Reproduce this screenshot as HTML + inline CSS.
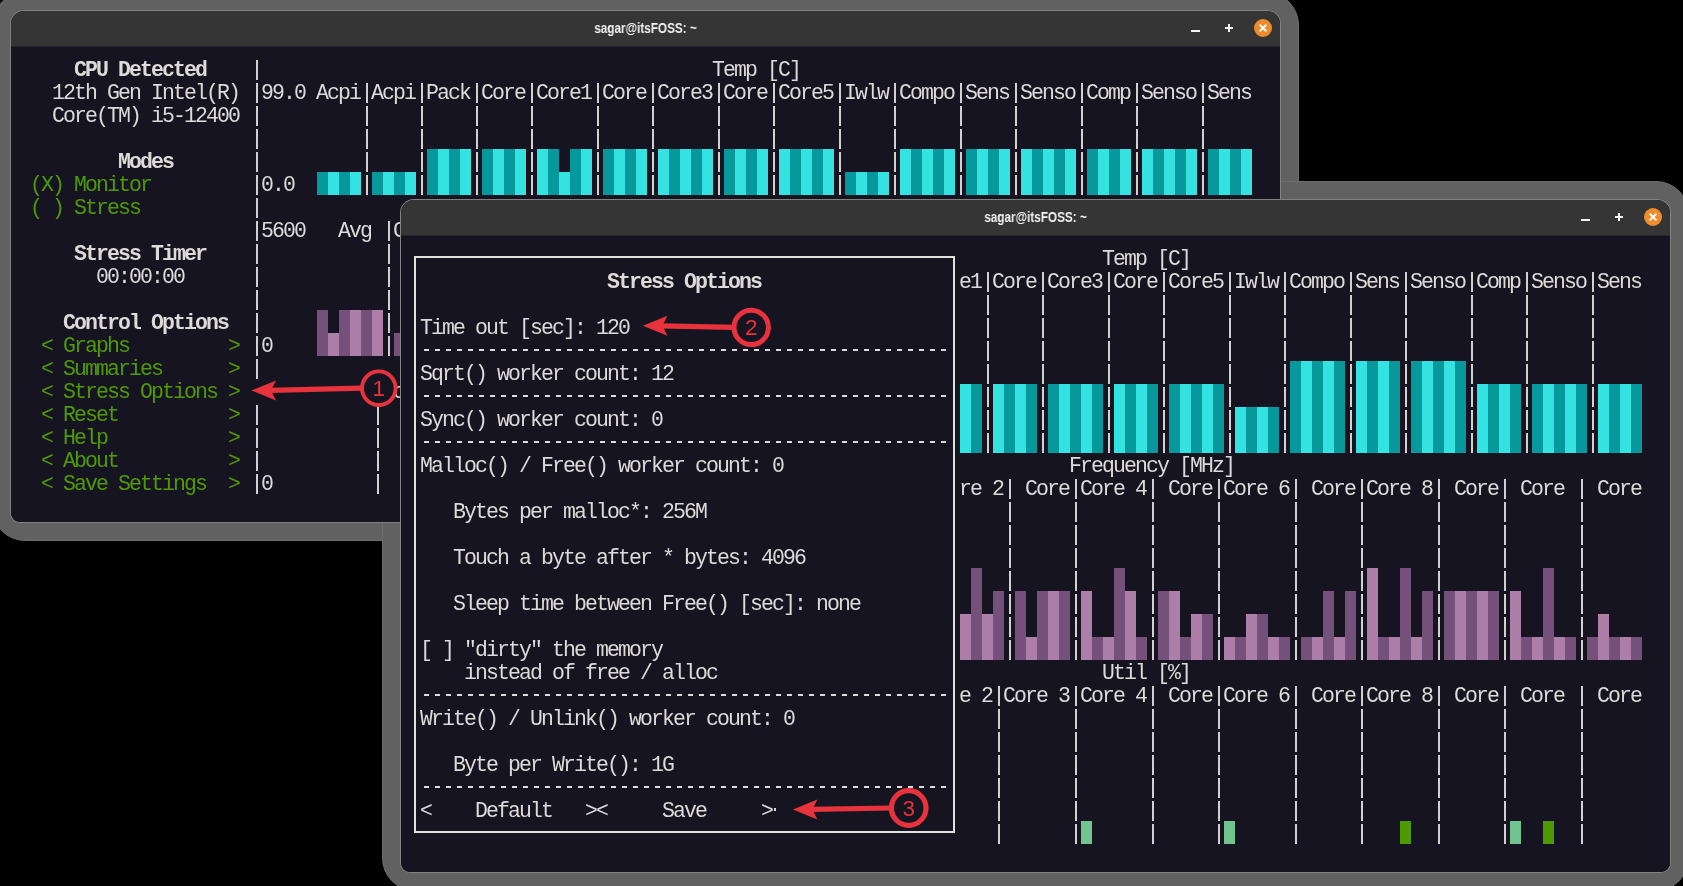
<!DOCTYPE html><html><head><meta charset="utf-8"><style>
*{margin:0;padding:0;box-sizing:border-box}
html,body{width:1683px;height:886px;overflow:hidden;background:#000;position:relative}
.sh{position:absolute;background:#616161;border:1px solid #6c6c6c}
.win{position:absolute;border-radius:14px 14px 10px 10px;overflow:hidden;background:#828282}
.inner{position:absolute;left:1px;top:1px;right:1px;bottom:1px;border-radius:13px 13px 9px 9px;overflow:hidden;background:#171421}
.tb{position:absolute;left:0;top:0;right:0;height:36px;background:#353535;border-bottom:1px solid #262626}
.tt{will-change:transform;position:absolute;left:0;right:0;top:8.5px;text-align:center;font-family:"Liberation Sans",sans-serif;font-weight:bold;font-size:14px;color:#f4f4f4;transform:scaleX(0.84)}
.bmin{position:absolute;right:80.5px;top:18.8px;width:8.4px;height:2.6px;background:#f4f4f4}
.bplus{position:absolute;right:47px;top:12.8px;width:8.4px;height:8.4px}
.bplus div:first-child{position:absolute;left:0;top:3.2px;width:8.4px;height:2.1px;background:#f4f4f4}
.bplus div:last-child{position:absolute;left:3.2px;top:0;width:2.1px;height:8.4px;background:#f4f4f4}
.bclose{position:absolute;right:8px;top:8px;width:18px;height:18px;border-radius:50%;background:#ef8c2b}
.bclose svg{position:absolute;left:0;top:0}
.term{position:absolute;left:0;top:36px;right:0;background:#171421}
.L{position:absolute;left:0;top:0;width:1683px;height:886px;overflow:hidden;will-change:transform}
.b{position:absolute;width:11px}
.s{position:absolute;width:2.1px;height:19.6px;background:#d2d1cd}
.t{position:absolute;height:23px;line-height:23px;white-space:pre;font-family:"Liberation Mono",monospace;font-size:21.5px;letter-spacing:-1.902px;margin-left:-0.95px;margin-top:1.5px;color:#dcdbd7}
.t.bd{font-weight:bold}
.t.g{color:#4e9a06}
.ar{position:absolute;left:0;top:0}
</style></head><body>
<div class="sh" style="left:-8px;top:-8px;width:1307px;height:549px;border-radius:33px"></div>
<div class="sh" style="left:382px;top:181px;width:1307px;height:710px;border-radius:33px"></div>
<div class="win" style="left:10px;top:10px;width:1271px;height:513px">
<div class="inner">
<div class="tb"><div class="tt">sagar@itsFOSS: ~</div>
<div class="bmin"></div><div class="bplus"><div></div><div></div></div><div class="bclose"><svg width="18" height="18" viewBox="0 0 18 18"><path d="M5.6 5.6 L12.4 12.4 M12.4 5.6 L5.6 12.4" stroke="#fff" stroke-width="2" stroke-linecap="butt"/></svg></div>
</div>
<div class="term" style="height:475px"></div>
</div>
</div>
<div class="L" style="clip-path:inset(47px 402px 363px 11px)">
<div class="b" style="left:317.0px;top:172.0px;height:23.0px;background:#06989a"></div>
<div class="b" style="left:328.0px;top:172.0px;height:23.0px;background:#34e2e2"></div>
<div class="b" style="left:339.0px;top:172.0px;height:23.0px;background:#06989a"></div>
<div class="b" style="left:350.0px;top:172.0px;height:23.0px;background:#34e2e2"></div>
<div class="b" style="left:372.0px;top:172.0px;height:23.0px;background:#06989a"></div>
<div class="b" style="left:383.0px;top:172.0px;height:23.0px;background:#34e2e2"></div>
<div class="b" style="left:394.0px;top:172.0px;height:23.0px;background:#06989a"></div>
<div class="b" style="left:405.0px;top:172.0px;height:23.0px;background:#34e2e2"></div>
<div class="b" style="left:427.0px;top:149.0px;height:46.0px;background:#06989a"></div>
<div class="b" style="left:438.0px;top:149.0px;height:46.0px;background:#34e2e2"></div>
<div class="b" style="left:449.0px;top:149.0px;height:46.0px;background:#06989a"></div>
<div class="b" style="left:460.0px;top:149.0px;height:46.0px;background:#34e2e2"></div>
<div class="b" style="left:482.0px;top:149.0px;height:46.0px;background:#06989a"></div>
<div class="b" style="left:493.0px;top:149.0px;height:46.0px;background:#34e2e2"></div>
<div class="b" style="left:504.0px;top:149.0px;height:46.0px;background:#06989a"></div>
<div class="b" style="left:515.0px;top:149.0px;height:46.0px;background:#34e2e2"></div>
<div class="b" style="left:537.0px;top:149.0px;height:46.0px;background:#34e2e2"></div>
<div class="b" style="left:548.0px;top:149.0px;height:46.0px;background:#06989a"></div>
<div class="b" style="left:559.0px;top:172.0px;height:23.0px;background:#34e2e2"></div>
<div class="b" style="left:570.0px;top:149.0px;height:46.0px;background:#06989a"></div>
<div class="b" style="left:581.0px;top:149.0px;height:46.0px;background:#34e2e2"></div>
<div class="b" style="left:603.0px;top:149.0px;height:46.0px;background:#06989a"></div>
<div class="b" style="left:614.0px;top:149.0px;height:46.0px;background:#34e2e2"></div>
<div class="b" style="left:625.0px;top:149.0px;height:46.0px;background:#06989a"></div>
<div class="b" style="left:636.0px;top:149.0px;height:46.0px;background:#34e2e2"></div>
<div class="b" style="left:658.0px;top:149.0px;height:46.0px;background:#34e2e2"></div>
<div class="b" style="left:669.0px;top:149.0px;height:46.0px;background:#06989a"></div>
<div class="b" style="left:680.0px;top:149.0px;height:46.0px;background:#34e2e2"></div>
<div class="b" style="left:691.0px;top:149.0px;height:46.0px;background:#06989a"></div>
<div class="b" style="left:702.0px;top:149.0px;height:46.0px;background:#34e2e2"></div>
<div class="b" style="left:724.0px;top:149.0px;height:46.0px;background:#06989a"></div>
<div class="b" style="left:735.0px;top:149.0px;height:46.0px;background:#34e2e2"></div>
<div class="b" style="left:746.0px;top:149.0px;height:46.0px;background:#06989a"></div>
<div class="b" style="left:757.0px;top:149.0px;height:46.0px;background:#34e2e2"></div>
<div class="b" style="left:779.0px;top:149.0px;height:46.0px;background:#34e2e2"></div>
<div class="b" style="left:790.0px;top:149.0px;height:46.0px;background:#06989a"></div>
<div class="b" style="left:801.0px;top:149.0px;height:46.0px;background:#34e2e2"></div>
<div class="b" style="left:812.0px;top:149.0px;height:46.0px;background:#06989a"></div>
<div class="b" style="left:823.0px;top:149.0px;height:46.0px;background:#34e2e2"></div>
<div class="b" style="left:845.0px;top:172.0px;height:23.0px;background:#06989a"></div>
<div class="b" style="left:856.0px;top:172.0px;height:23.0px;background:#34e2e2"></div>
<div class="b" style="left:867.0px;top:172.0px;height:23.0px;background:#06989a"></div>
<div class="b" style="left:878.0px;top:172.0px;height:23.0px;background:#34e2e2"></div>
<div class="b" style="left:900.0px;top:149.0px;height:46.0px;background:#34e2e2"></div>
<div class="b" style="left:911.0px;top:149.0px;height:46.0px;background:#06989a"></div>
<div class="b" style="left:922.0px;top:149.0px;height:46.0px;background:#34e2e2"></div>
<div class="b" style="left:933.0px;top:149.0px;height:46.0px;background:#06989a"></div>
<div class="b" style="left:944.0px;top:149.0px;height:46.0px;background:#34e2e2"></div>
<div class="b" style="left:966.0px;top:149.0px;height:46.0px;background:#06989a"></div>
<div class="b" style="left:977.0px;top:149.0px;height:46.0px;background:#34e2e2"></div>
<div class="b" style="left:988.0px;top:149.0px;height:46.0px;background:#06989a"></div>
<div class="b" style="left:999.0px;top:149.0px;height:46.0px;background:#34e2e2"></div>
<div class="b" style="left:1021.0px;top:149.0px;height:46.0px;background:#34e2e2"></div>
<div class="b" style="left:1032.0px;top:149.0px;height:46.0px;background:#06989a"></div>
<div class="b" style="left:1043.0px;top:149.0px;height:46.0px;background:#34e2e2"></div>
<div class="b" style="left:1054.0px;top:149.0px;height:46.0px;background:#06989a"></div>
<div class="b" style="left:1065.0px;top:149.0px;height:46.0px;background:#34e2e2"></div>
<div class="b" style="left:1087.0px;top:149.0px;height:46.0px;background:#06989a"></div>
<div class="b" style="left:1098.0px;top:149.0px;height:46.0px;background:#34e2e2"></div>
<div class="b" style="left:1109.0px;top:149.0px;height:46.0px;background:#06989a"></div>
<div class="b" style="left:1120.0px;top:149.0px;height:46.0px;background:#34e2e2"></div>
<div class="b" style="left:1142.0px;top:149.0px;height:46.0px;background:#34e2e2"></div>
<div class="b" style="left:1153.0px;top:149.0px;height:46.0px;background:#06989a"></div>
<div class="b" style="left:1164.0px;top:149.0px;height:46.0px;background:#34e2e2"></div>
<div class="b" style="left:1175.0px;top:149.0px;height:46.0px;background:#06989a"></div>
<div class="b" style="left:1186.0px;top:149.0px;height:46.0px;background:#34e2e2"></div>
<div class="b" style="left:1208.0px;top:149.0px;height:46.0px;background:#06989a"></div>
<div class="b" style="left:1219.0px;top:149.0px;height:46.0px;background:#34e2e2"></div>
<div class="b" style="left:1230.0px;top:149.0px;height:46.0px;background:#06989a"></div>
<div class="b" style="left:1241.0px;top:149.0px;height:46.0px;background:#34e2e2"></div>
<div class="b" style="left:317.0px;top:310.0px;height:46.0px;background:#75507b"></div>
<div class="b" style="left:328.0px;top:333.0px;height:23.0px;background:#ad7fa8"></div>
<div class="b" style="left:339.0px;top:310.0px;height:46.0px;background:#75507b"></div>
<div class="b" style="left:350.0px;top:310.0px;height:46.0px;background:#ad7fa8"></div>
<div class="b" style="left:361.0px;top:310.0px;height:46.0px;background:#75507b"></div>
<div class="b" style="left:372.0px;top:310.0px;height:46.0px;background:#ad7fa8"></div>
<div class="b" style="left:394.0px;top:333.0px;height:23.0px;background:#75507b"></div>
<div class="s" style="left:255.5px;top:60.0px"></div>
<div class="s" style="left:255.5px;top:83.0px"></div>
<div class="s" style="left:365.5px;top:83.0px"></div>
<div class="s" style="left:420.5px;top:83.0px"></div>
<div class="s" style="left:475.5px;top:83.0px"></div>
<div class="s" style="left:530.5px;top:83.0px"></div>
<div class="s" style="left:596.5px;top:83.0px"></div>
<div class="s" style="left:651.5px;top:83.0px"></div>
<div class="s" style="left:717.5px;top:83.0px"></div>
<div class="s" style="left:772.5px;top:83.0px"></div>
<div class="s" style="left:838.5px;top:83.0px"></div>
<div class="s" style="left:893.5px;top:83.0px"></div>
<div class="s" style="left:959.5px;top:83.0px"></div>
<div class="s" style="left:1014.5px;top:83.0px"></div>
<div class="s" style="left:1080.5px;top:83.0px"></div>
<div class="s" style="left:1135.5px;top:83.0px"></div>
<div class="s" style="left:1201.5px;top:83.0px"></div>
<div class="s" style="left:255.5px;top:106.0px"></div>
<div class="s" style="left:365.5px;top:106.0px"></div>
<div class="s" style="left:420.5px;top:106.0px"></div>
<div class="s" style="left:475.5px;top:106.0px"></div>
<div class="s" style="left:530.5px;top:106.0px"></div>
<div class="s" style="left:596.5px;top:106.0px"></div>
<div class="s" style="left:651.5px;top:106.0px"></div>
<div class="s" style="left:717.5px;top:106.0px"></div>
<div class="s" style="left:772.5px;top:106.0px"></div>
<div class="s" style="left:838.5px;top:106.0px"></div>
<div class="s" style="left:893.5px;top:106.0px"></div>
<div class="s" style="left:959.5px;top:106.0px"></div>
<div class="s" style="left:1014.5px;top:106.0px"></div>
<div class="s" style="left:1080.5px;top:106.0px"></div>
<div class="s" style="left:1135.5px;top:106.0px"></div>
<div class="s" style="left:1201.5px;top:106.0px"></div>
<div class="s" style="left:255.5px;top:129.0px"></div>
<div class="s" style="left:365.5px;top:129.0px"></div>
<div class="s" style="left:420.5px;top:129.0px"></div>
<div class="s" style="left:475.5px;top:129.0px"></div>
<div class="s" style="left:530.5px;top:129.0px"></div>
<div class="s" style="left:596.5px;top:129.0px"></div>
<div class="s" style="left:651.5px;top:129.0px"></div>
<div class="s" style="left:717.5px;top:129.0px"></div>
<div class="s" style="left:772.5px;top:129.0px"></div>
<div class="s" style="left:838.5px;top:129.0px"></div>
<div class="s" style="left:893.5px;top:129.0px"></div>
<div class="s" style="left:959.5px;top:129.0px"></div>
<div class="s" style="left:1014.5px;top:129.0px"></div>
<div class="s" style="left:1080.5px;top:129.0px"></div>
<div class="s" style="left:1135.5px;top:129.0px"></div>
<div class="s" style="left:1201.5px;top:129.0px"></div>
<div class="s" style="left:255.5px;top:152.0px"></div>
<div class="s" style="left:365.5px;top:152.0px"></div>
<div class="s" style="left:420.5px;top:152.0px"></div>
<div class="s" style="left:475.5px;top:152.0px"></div>
<div class="s" style="left:530.5px;top:152.0px"></div>
<div class="s" style="left:596.5px;top:152.0px"></div>
<div class="s" style="left:651.5px;top:152.0px"></div>
<div class="s" style="left:717.5px;top:152.0px"></div>
<div class="s" style="left:772.5px;top:152.0px"></div>
<div class="s" style="left:838.5px;top:152.0px"></div>
<div class="s" style="left:893.5px;top:152.0px"></div>
<div class="s" style="left:959.5px;top:152.0px"></div>
<div class="s" style="left:1014.5px;top:152.0px"></div>
<div class="s" style="left:1080.5px;top:152.0px"></div>
<div class="s" style="left:1135.5px;top:152.0px"></div>
<div class="s" style="left:1201.5px;top:152.0px"></div>
<div class="s" style="left:255.5px;top:175.0px"></div>
<div class="s" style="left:365.5px;top:175.0px"></div>
<div class="s" style="left:420.5px;top:175.0px"></div>
<div class="s" style="left:475.5px;top:175.0px"></div>
<div class="s" style="left:530.5px;top:175.0px"></div>
<div class="s" style="left:596.5px;top:175.0px"></div>
<div class="s" style="left:651.5px;top:175.0px"></div>
<div class="s" style="left:717.5px;top:175.0px"></div>
<div class="s" style="left:772.5px;top:175.0px"></div>
<div class="s" style="left:838.5px;top:175.0px"></div>
<div class="s" style="left:893.5px;top:175.0px"></div>
<div class="s" style="left:959.5px;top:175.0px"></div>
<div class="s" style="left:1014.5px;top:175.0px"></div>
<div class="s" style="left:1080.5px;top:175.0px"></div>
<div class="s" style="left:1135.5px;top:175.0px"></div>
<div class="s" style="left:1201.5px;top:175.0px"></div>
<div class="s" style="left:255.5px;top:198.0px"></div>
<div class="s" style="left:255.5px;top:221.0px"></div>
<div class="s" style="left:387.5px;top:221.0px"></div>
<div class="s" style="left:255.5px;top:244.0px"></div>
<div class="s" style="left:387.5px;top:244.0px"></div>
<div class="s" style="left:255.5px;top:267.0px"></div>
<div class="s" style="left:387.5px;top:267.0px"></div>
<div class="s" style="left:255.5px;top:290.0px"></div>
<div class="s" style="left:387.5px;top:290.0px"></div>
<div class="s" style="left:255.5px;top:313.0px"></div>
<div class="s" style="left:387.5px;top:313.0px"></div>
<div class="s" style="left:255.5px;top:336.0px"></div>
<div class="s" style="left:387.5px;top:336.0px"></div>
<div class="s" style="left:255.5px;top:359.0px"></div>
<div class="s" style="left:255.5px;top:405.0px"></div>
<div class="s" style="left:376.5px;top:405.0px"></div>
<div class="s" style="left:255.5px;top:428.0px"></div>
<div class="s" style="left:376.5px;top:428.0px"></div>
<div class="s" style="left:255.5px;top:451.0px"></div>
<div class="s" style="left:376.5px;top:451.0px"></div>
<div class="s" style="left:255.5px;top:474.0px"></div>
<div class="s" style="left:376.5px;top:474.0px"></div>
<div class="t bd" style="left:75.0px;top:57.0px">CPU Detected</div>
<div class="t" style="left:713.0px;top:57.0px">Temp [C]</div>
<div class="t" style="left:53.0px;top:80.0px">12th Gen Intel(R)</div>
<div class="t" style="left:262.0px;top:80.0px">99.0 Acpi</div>
<div class="t" style="left:372.0px;top:80.0px">Acpi</div>
<div class="t" style="left:427.0px;top:80.0px">Pack</div>
<div class="t" style="left:482.0px;top:80.0px">Core</div>
<div class="t" style="left:537.0px;top:80.0px">Core1</div>
<div class="t" style="left:603.0px;top:80.0px">Core</div>
<div class="t" style="left:658.0px;top:80.0px">Core3</div>
<div class="t" style="left:724.0px;top:80.0px">Core</div>
<div class="t" style="left:779.0px;top:80.0px">Core5</div>
<div class="t" style="left:845.0px;top:80.0px">Iwlw</div>
<div class="t" style="left:900.0px;top:80.0px">Compo</div>
<div class="t" style="left:966.0px;top:80.0px">Sens</div>
<div class="t" style="left:1021.0px;top:80.0px">Senso</div>
<div class="t" style="left:1087.0px;top:80.0px">Comp</div>
<div class="t" style="left:1142.0px;top:80.0px">Senso</div>
<div class="t" style="left:1208.0px;top:80.0px">Sens</div>
<div class="t" style="left:53.0px;top:103.0px">Core(TM) i5-12400</div>
<div class="t bd" style="left:119.0px;top:149.0px">Modes</div>
<div class="t g" style="left:31.0px;top:172.0px">(X) Monitor</div>
<div class="t" style="left:262.0px;top:172.0px">0.0</div>
<div class="t g" style="left:31.0px;top:195.0px">( ) Stress</div>
<div class="t" style="left:262.0px;top:218.0px">5600   Avg</div>
<div class="t" style="left:394.0px;top:218.0px">C</div>
<div class="t bd" style="left:75.0px;top:241.0px">Stress Timer</div>
<div class="t" style="left:97.0px;top:264.0px">00:00:00</div>
<div class="t bd" style="left:64.0px;top:310.0px">Control Options</div>
<div class="t" style="left:262.0px;top:333.0px">0</div>
<div class="t g" style="left:42.0px;top:333.0px">&lt; Graphs         &gt;</div>
<div class="t g" style="left:42.0px;top:356.0px">&lt; Summaries      &gt;</div>
<div class="t g" style="left:42.0px;top:379.0px">&lt; Stress Options &gt;</div>
<div class="t g" style="left:42.0px;top:402.0px">&lt; Reset          &gt;</div>
<div class="t g" style="left:42.0px;top:425.0px">&lt; Help           &gt;</div>
<div class="t g" style="left:42.0px;top:448.0px">&lt; About          &gt;</div>
<div class="t g" style="left:42.0px;top:471.0px">&lt; Save Settings  &gt;</div>
<div class="t" style="left:262.0px;top:471.0px">0</div>
<div class="t" style="left:383.0px;top:379.0px">Co</div>
</div>
<svg class="ar" width="1683" height="886" viewBox="0 0 1683 886"><path d="M269.5 390.4 L362.0 388.2" stroke="#e8333c" stroke-width="5.2" /><path d="M251.5 390.4 L276.0 380.4 L271.0 390.4 L276.0 400.4 Z" fill="#e8333c"/><circle cx="378.8" cy="388.2" r="16.8" fill="#171421" stroke="#e8333c" stroke-width="3.9"/><text x="378.8" y="396.2" font-family="Liberation Sans" font-size="22.5" fill="#e8333c" text-anchor="middle">1</text></svg>
<div class="win" style="left:400px;top:199px;width:1271px;height:674px">
<div class="inner">
<div class="tb"><div class="tt">sagar@itsFOSS: ~</div>
<div class="bmin"></div><div class="bplus"><div></div><div></div></div><div class="bclose"><svg width="18" height="18" viewBox="0 0 18 18"><path d="M5.6 5.6 L12.4 12.4 M12.4 5.6 L5.6 12.4" stroke="#fff" stroke-width="2" stroke-linecap="butt"/></svg></div>
</div>
<div class="term" style="height:636px"></div>
</div>
</div>
<div class="L" style="clip-path:inset(236px 13px 14px 401px)">
<div class="b" style="left:960.0px;top:384.0px;height:69.0px;background:#34e2e2"></div>
<div class="b" style="left:971.0px;top:384.0px;height:69.0px;background:#06989a"></div>
<div class="b" style="left:993.0px;top:384.0px;height:69.0px;background:#34e2e2"></div>
<div class="b" style="left:1004.0px;top:384.0px;height:69.0px;background:#06989a"></div>
<div class="b" style="left:1015.0px;top:384.0px;height:69.0px;background:#34e2e2"></div>
<div class="b" style="left:1026.0px;top:384.0px;height:69.0px;background:#06989a"></div>
<div class="b" style="left:1048.0px;top:384.0px;height:69.0px;background:#06989a"></div>
<div class="b" style="left:1059.0px;top:384.0px;height:69.0px;background:#34e2e2"></div>
<div class="b" style="left:1070.0px;top:384.0px;height:69.0px;background:#06989a"></div>
<div class="b" style="left:1081.0px;top:384.0px;height:69.0px;background:#34e2e2"></div>
<div class="b" style="left:1092.0px;top:384.0px;height:69.0px;background:#06989a"></div>
<div class="b" style="left:1114.0px;top:384.0px;height:69.0px;background:#34e2e2"></div>
<div class="b" style="left:1125.0px;top:384.0px;height:69.0px;background:#06989a"></div>
<div class="b" style="left:1136.0px;top:384.0px;height:69.0px;background:#34e2e2"></div>
<div class="b" style="left:1147.0px;top:384.0px;height:69.0px;background:#06989a"></div>
<div class="b" style="left:1169.0px;top:384.0px;height:69.0px;background:#06989a"></div>
<div class="b" style="left:1180.0px;top:384.0px;height:69.0px;background:#34e2e2"></div>
<div class="b" style="left:1191.0px;top:384.0px;height:69.0px;background:#06989a"></div>
<div class="b" style="left:1202.0px;top:384.0px;height:69.0px;background:#34e2e2"></div>
<div class="b" style="left:1213.0px;top:384.0px;height:69.0px;background:#06989a"></div>
<div class="b" style="left:1235.0px;top:407.0px;height:46.0px;background:#34e2e2"></div>
<div class="b" style="left:1246.0px;top:407.0px;height:46.0px;background:#06989a"></div>
<div class="b" style="left:1257.0px;top:407.0px;height:46.0px;background:#34e2e2"></div>
<div class="b" style="left:1268.0px;top:407.0px;height:46.0px;background:#06989a"></div>
<div class="b" style="left:1290.0px;top:361.0px;height:92.0px;background:#06989a"></div>
<div class="b" style="left:1301.0px;top:361.0px;height:92.0px;background:#34e2e2"></div>
<div class="b" style="left:1312.0px;top:361.0px;height:92.0px;background:#06989a"></div>
<div class="b" style="left:1323.0px;top:361.0px;height:92.0px;background:#34e2e2"></div>
<div class="b" style="left:1334.0px;top:361.0px;height:92.0px;background:#06989a"></div>
<div class="b" style="left:1356.0px;top:361.0px;height:92.0px;background:#34e2e2"></div>
<div class="b" style="left:1367.0px;top:361.0px;height:92.0px;background:#06989a"></div>
<div class="b" style="left:1378.0px;top:361.0px;height:92.0px;background:#34e2e2"></div>
<div class="b" style="left:1389.0px;top:361.0px;height:92.0px;background:#06989a"></div>
<div class="b" style="left:1411.0px;top:361.0px;height:92.0px;background:#06989a"></div>
<div class="b" style="left:1422.0px;top:361.0px;height:92.0px;background:#34e2e2"></div>
<div class="b" style="left:1433.0px;top:361.0px;height:92.0px;background:#06989a"></div>
<div class="b" style="left:1444.0px;top:361.0px;height:92.0px;background:#34e2e2"></div>
<div class="b" style="left:1455.0px;top:361.0px;height:92.0px;background:#06989a"></div>
<div class="b" style="left:1477.0px;top:384.0px;height:69.0px;background:#34e2e2"></div>
<div class="b" style="left:1488.0px;top:384.0px;height:69.0px;background:#06989a"></div>
<div class="b" style="left:1499.0px;top:384.0px;height:69.0px;background:#34e2e2"></div>
<div class="b" style="left:1510.0px;top:384.0px;height:69.0px;background:#06989a"></div>
<div class="b" style="left:1532.0px;top:384.0px;height:69.0px;background:#06989a"></div>
<div class="b" style="left:1543.0px;top:384.0px;height:69.0px;background:#34e2e2"></div>
<div class="b" style="left:1554.0px;top:384.0px;height:69.0px;background:#06989a"></div>
<div class="b" style="left:1565.0px;top:384.0px;height:69.0px;background:#34e2e2"></div>
<div class="b" style="left:1576.0px;top:384.0px;height:69.0px;background:#06989a"></div>
<div class="b" style="left:1598.0px;top:384.0px;height:69.0px;background:#34e2e2"></div>
<div class="b" style="left:1609.0px;top:384.0px;height:69.0px;background:#06989a"></div>
<div class="b" style="left:1620.0px;top:384.0px;height:69.0px;background:#34e2e2"></div>
<div class="b" style="left:1631.0px;top:384.0px;height:69.0px;background:#06989a"></div>
<div class="b" style="left:960.0px;top:614.0px;height:46.0px;background:#ad7fa8"></div>
<div class="b" style="left:971.0px;top:568.0px;height:92.0px;background:#75507b"></div>
<div class="b" style="left:982.0px;top:614.0px;height:46.0px;background:#ad7fa8"></div>
<div class="b" style="left:993.0px;top:591.0px;height:69.0px;background:#75507b"></div>
<div class="b" style="left:1015.0px;top:591.0px;height:69.0px;background:#75507b"></div>
<div class="b" style="left:1026.0px;top:637.0px;height:23.0px;background:#ad7fa8"></div>
<div class="b" style="left:1037.0px;top:591.0px;height:69.0px;background:#75507b"></div>
<div class="b" style="left:1048.0px;top:591.0px;height:69.0px;background:#ad7fa8"></div>
<div class="b" style="left:1059.0px;top:591.0px;height:69.0px;background:#75507b"></div>
<div class="b" style="left:1081.0px;top:591.0px;height:69.0px;background:#ad7fa8"></div>
<div class="b" style="left:1092.0px;top:637.0px;height:23.0px;background:#75507b"></div>
<div class="b" style="left:1103.0px;top:637.0px;height:23.0px;background:#ad7fa8"></div>
<div class="b" style="left:1114.0px;top:568.0px;height:92.0px;background:#75507b"></div>
<div class="b" style="left:1125.0px;top:591.0px;height:69.0px;background:#ad7fa8"></div>
<div class="b" style="left:1136.0px;top:637.0px;height:23.0px;background:#75507b"></div>
<div class="b" style="left:1158.0px;top:591.0px;height:69.0px;background:#75507b"></div>
<div class="b" style="left:1169.0px;top:591.0px;height:69.0px;background:#ad7fa8"></div>
<div class="b" style="left:1180.0px;top:637.0px;height:23.0px;background:#75507b"></div>
<div class="b" style="left:1191.0px;top:614.0px;height:46.0px;background:#ad7fa8"></div>
<div class="b" style="left:1202.0px;top:614.0px;height:46.0px;background:#75507b"></div>
<div class="b" style="left:1224.0px;top:637.0px;height:23.0px;background:#ad7fa8"></div>
<div class="b" style="left:1235.0px;top:637.0px;height:23.0px;background:#75507b"></div>
<div class="b" style="left:1246.0px;top:614.0px;height:46.0px;background:#ad7fa8"></div>
<div class="b" style="left:1257.0px;top:614.0px;height:46.0px;background:#75507b"></div>
<div class="b" style="left:1268.0px;top:637.0px;height:23.0px;background:#ad7fa8"></div>
<div class="b" style="left:1279.0px;top:637.0px;height:23.0px;background:#75507b"></div>
<div class="b" style="left:1301.0px;top:637.0px;height:23.0px;background:#75507b"></div>
<div class="b" style="left:1312.0px;top:637.0px;height:23.0px;background:#ad7fa8"></div>
<div class="b" style="left:1323.0px;top:591.0px;height:69.0px;background:#75507b"></div>
<div class="b" style="left:1334.0px;top:637.0px;height:23.0px;background:#ad7fa8"></div>
<div class="b" style="left:1345.0px;top:591.0px;height:69.0px;background:#75507b"></div>
<div class="b" style="left:1367.0px;top:568.0px;height:92.0px;background:#ad7fa8"></div>
<div class="b" style="left:1378.0px;top:637.0px;height:23.0px;background:#75507b"></div>
<div class="b" style="left:1389.0px;top:637.0px;height:23.0px;background:#ad7fa8"></div>
<div class="b" style="left:1400.0px;top:568.0px;height:92.0px;background:#75507b"></div>
<div class="b" style="left:1411.0px;top:637.0px;height:23.0px;background:#ad7fa8"></div>
<div class="b" style="left:1422.0px;top:591.0px;height:69.0px;background:#75507b"></div>
<div class="b" style="left:1444.0px;top:591.0px;height:69.0px;background:#75507b"></div>
<div class="b" style="left:1455.0px;top:591.0px;height:69.0px;background:#ad7fa8"></div>
<div class="b" style="left:1466.0px;top:591.0px;height:69.0px;background:#75507b"></div>
<div class="b" style="left:1477.0px;top:591.0px;height:69.0px;background:#ad7fa8"></div>
<div class="b" style="left:1488.0px;top:591.0px;height:69.0px;background:#75507b"></div>
<div class="b" style="left:1510.0px;top:591.0px;height:69.0px;background:#ad7fa8"></div>
<div class="b" style="left:1521.0px;top:637.0px;height:23.0px;background:#75507b"></div>
<div class="b" style="left:1532.0px;top:637.0px;height:23.0px;background:#ad7fa8"></div>
<div class="b" style="left:1543.0px;top:568.0px;height:92.0px;background:#75507b"></div>
<div class="b" style="left:1554.0px;top:637.0px;height:23.0px;background:#ad7fa8"></div>
<div class="b" style="left:1565.0px;top:637.0px;height:23.0px;background:#75507b"></div>
<div class="b" style="left:1587.0px;top:637.0px;height:23.0px;background:#75507b"></div>
<div class="b" style="left:1598.0px;top:614.0px;height:46.0px;background:#ad7fa8"></div>
<div class="b" style="left:1609.0px;top:637.0px;height:23.0px;background:#75507b"></div>
<div class="b" style="left:1620.0px;top:637.0px;height:23.0px;background:#ad7fa8"></div>
<div class="b" style="left:1631.0px;top:637.0px;height:23.0px;background:#75507b"></div>
<div class="b" style="left:1081.0px;top:821.0px;height:23.0px;background:#72c48e"></div>
<div class="b" style="left:1224.0px;top:821.0px;height:23.0px;background:#72c48e"></div>
<div class="b" style="left:1400.0px;top:821.0px;height:23.0px;background:#4e9a06"></div>
<div class="b" style="left:1510.0px;top:821.0px;height:23.0px;background:#72c48e"></div>
<div class="b" style="left:1543.0px;top:821.0px;height:23.0px;background:#4e9a06"></div>
<div class="s" style="left:986.5px;top:272.0px"></div>
<div class="s" style="left:1041.5px;top:272.0px"></div>
<div class="s" style="left:1107.5px;top:272.0px"></div>
<div class="s" style="left:1162.5px;top:272.0px"></div>
<div class="s" style="left:1228.5px;top:272.0px"></div>
<div class="s" style="left:1283.5px;top:272.0px"></div>
<div class="s" style="left:1349.5px;top:272.0px"></div>
<div class="s" style="left:1404.5px;top:272.0px"></div>
<div class="s" style="left:1470.5px;top:272.0px"></div>
<div class="s" style="left:1525.5px;top:272.0px"></div>
<div class="s" style="left:1591.5px;top:272.0px"></div>
<div class="s" style="left:986.5px;top:295.0px"></div>
<div class="s" style="left:1041.5px;top:295.0px"></div>
<div class="s" style="left:1107.5px;top:295.0px"></div>
<div class="s" style="left:1162.5px;top:295.0px"></div>
<div class="s" style="left:1228.5px;top:295.0px"></div>
<div class="s" style="left:1283.5px;top:295.0px"></div>
<div class="s" style="left:1349.5px;top:295.0px"></div>
<div class="s" style="left:1404.5px;top:295.0px"></div>
<div class="s" style="left:1470.5px;top:295.0px"></div>
<div class="s" style="left:1525.5px;top:295.0px"></div>
<div class="s" style="left:1591.5px;top:295.0px"></div>
<div class="s" style="left:986.5px;top:318.0px"></div>
<div class="s" style="left:1041.5px;top:318.0px"></div>
<div class="s" style="left:1107.5px;top:318.0px"></div>
<div class="s" style="left:1162.5px;top:318.0px"></div>
<div class="s" style="left:1228.5px;top:318.0px"></div>
<div class="s" style="left:1283.5px;top:318.0px"></div>
<div class="s" style="left:1349.5px;top:318.0px"></div>
<div class="s" style="left:1404.5px;top:318.0px"></div>
<div class="s" style="left:1470.5px;top:318.0px"></div>
<div class="s" style="left:1525.5px;top:318.0px"></div>
<div class="s" style="left:1591.5px;top:318.0px"></div>
<div class="s" style="left:986.5px;top:341.0px"></div>
<div class="s" style="left:1041.5px;top:341.0px"></div>
<div class="s" style="left:1107.5px;top:341.0px"></div>
<div class="s" style="left:1162.5px;top:341.0px"></div>
<div class="s" style="left:1228.5px;top:341.0px"></div>
<div class="s" style="left:1283.5px;top:341.0px"></div>
<div class="s" style="left:1349.5px;top:341.0px"></div>
<div class="s" style="left:1404.5px;top:341.0px"></div>
<div class="s" style="left:1470.5px;top:341.0px"></div>
<div class="s" style="left:1525.5px;top:341.0px"></div>
<div class="s" style="left:1591.5px;top:341.0px"></div>
<div class="s" style="left:986.5px;top:364.0px"></div>
<div class="s" style="left:1041.5px;top:364.0px"></div>
<div class="s" style="left:1107.5px;top:364.0px"></div>
<div class="s" style="left:1162.5px;top:364.0px"></div>
<div class="s" style="left:1228.5px;top:364.0px"></div>
<div class="s" style="left:1283.5px;top:364.0px"></div>
<div class="s" style="left:1349.5px;top:364.0px"></div>
<div class="s" style="left:1404.5px;top:364.0px"></div>
<div class="s" style="left:1470.5px;top:364.0px"></div>
<div class="s" style="left:1525.5px;top:364.0px"></div>
<div class="s" style="left:1591.5px;top:364.0px"></div>
<div class="s" style="left:986.5px;top:387.0px"></div>
<div class="s" style="left:1041.5px;top:387.0px"></div>
<div class="s" style="left:1107.5px;top:387.0px"></div>
<div class="s" style="left:1162.5px;top:387.0px"></div>
<div class="s" style="left:1228.5px;top:387.0px"></div>
<div class="s" style="left:1283.5px;top:387.0px"></div>
<div class="s" style="left:1349.5px;top:387.0px"></div>
<div class="s" style="left:1404.5px;top:387.0px"></div>
<div class="s" style="left:1470.5px;top:387.0px"></div>
<div class="s" style="left:1525.5px;top:387.0px"></div>
<div class="s" style="left:1591.5px;top:387.0px"></div>
<div class="s" style="left:986.5px;top:410.0px"></div>
<div class="s" style="left:1041.5px;top:410.0px"></div>
<div class="s" style="left:1107.5px;top:410.0px"></div>
<div class="s" style="left:1162.5px;top:410.0px"></div>
<div class="s" style="left:1228.5px;top:410.0px"></div>
<div class="s" style="left:1283.5px;top:410.0px"></div>
<div class="s" style="left:1349.5px;top:410.0px"></div>
<div class="s" style="left:1404.5px;top:410.0px"></div>
<div class="s" style="left:1470.5px;top:410.0px"></div>
<div class="s" style="left:1525.5px;top:410.0px"></div>
<div class="s" style="left:1591.5px;top:410.0px"></div>
<div class="s" style="left:986.5px;top:433.0px"></div>
<div class="s" style="left:1041.5px;top:433.0px"></div>
<div class="s" style="left:1107.5px;top:433.0px"></div>
<div class="s" style="left:1162.5px;top:433.0px"></div>
<div class="s" style="left:1228.5px;top:433.0px"></div>
<div class="s" style="left:1283.5px;top:433.0px"></div>
<div class="s" style="left:1349.5px;top:433.0px"></div>
<div class="s" style="left:1404.5px;top:433.0px"></div>
<div class="s" style="left:1470.5px;top:433.0px"></div>
<div class="s" style="left:1525.5px;top:433.0px"></div>
<div class="s" style="left:1591.5px;top:433.0px"></div>
<div class="s" style="left:1008.5px;top:479.0px"></div>
<div class="s" style="left:1074.5px;top:479.0px"></div>
<div class="s" style="left:1151.5px;top:479.0px"></div>
<div class="s" style="left:1217.5px;top:479.0px"></div>
<div class="s" style="left:1294.5px;top:479.0px"></div>
<div class="s" style="left:1360.5px;top:479.0px"></div>
<div class="s" style="left:1437.5px;top:479.0px"></div>
<div class="s" style="left:1503.5px;top:479.0px"></div>
<div class="s" style="left:1580.5px;top:479.0px"></div>
<div class="s" style="left:1008.5px;top:502.0px"></div>
<div class="s" style="left:1074.5px;top:502.0px"></div>
<div class="s" style="left:1151.5px;top:502.0px"></div>
<div class="s" style="left:1217.5px;top:502.0px"></div>
<div class="s" style="left:1294.5px;top:502.0px"></div>
<div class="s" style="left:1360.5px;top:502.0px"></div>
<div class="s" style="left:1437.5px;top:502.0px"></div>
<div class="s" style="left:1503.5px;top:502.0px"></div>
<div class="s" style="left:1580.5px;top:502.0px"></div>
<div class="s" style="left:1008.5px;top:525.0px"></div>
<div class="s" style="left:1074.5px;top:525.0px"></div>
<div class="s" style="left:1151.5px;top:525.0px"></div>
<div class="s" style="left:1217.5px;top:525.0px"></div>
<div class="s" style="left:1294.5px;top:525.0px"></div>
<div class="s" style="left:1360.5px;top:525.0px"></div>
<div class="s" style="left:1437.5px;top:525.0px"></div>
<div class="s" style="left:1503.5px;top:525.0px"></div>
<div class="s" style="left:1580.5px;top:525.0px"></div>
<div class="s" style="left:1008.5px;top:548.0px"></div>
<div class="s" style="left:1074.5px;top:548.0px"></div>
<div class="s" style="left:1151.5px;top:548.0px"></div>
<div class="s" style="left:1217.5px;top:548.0px"></div>
<div class="s" style="left:1294.5px;top:548.0px"></div>
<div class="s" style="left:1360.5px;top:548.0px"></div>
<div class="s" style="left:1437.5px;top:548.0px"></div>
<div class="s" style="left:1503.5px;top:548.0px"></div>
<div class="s" style="left:1580.5px;top:548.0px"></div>
<div class="s" style="left:1008.5px;top:571.0px"></div>
<div class="s" style="left:1074.5px;top:571.0px"></div>
<div class="s" style="left:1151.5px;top:571.0px"></div>
<div class="s" style="left:1217.5px;top:571.0px"></div>
<div class="s" style="left:1294.5px;top:571.0px"></div>
<div class="s" style="left:1360.5px;top:571.0px"></div>
<div class="s" style="left:1437.5px;top:571.0px"></div>
<div class="s" style="left:1503.5px;top:571.0px"></div>
<div class="s" style="left:1580.5px;top:571.0px"></div>
<div class="s" style="left:1008.5px;top:594.0px"></div>
<div class="s" style="left:1074.5px;top:594.0px"></div>
<div class="s" style="left:1151.5px;top:594.0px"></div>
<div class="s" style="left:1217.5px;top:594.0px"></div>
<div class="s" style="left:1294.5px;top:594.0px"></div>
<div class="s" style="left:1360.5px;top:594.0px"></div>
<div class="s" style="left:1437.5px;top:594.0px"></div>
<div class="s" style="left:1503.5px;top:594.0px"></div>
<div class="s" style="left:1580.5px;top:594.0px"></div>
<div class="s" style="left:1008.5px;top:617.0px"></div>
<div class="s" style="left:1074.5px;top:617.0px"></div>
<div class="s" style="left:1151.5px;top:617.0px"></div>
<div class="s" style="left:1217.5px;top:617.0px"></div>
<div class="s" style="left:1294.5px;top:617.0px"></div>
<div class="s" style="left:1360.5px;top:617.0px"></div>
<div class="s" style="left:1437.5px;top:617.0px"></div>
<div class="s" style="left:1503.5px;top:617.0px"></div>
<div class="s" style="left:1580.5px;top:617.0px"></div>
<div class="s" style="left:1008.5px;top:640.0px"></div>
<div class="s" style="left:1074.5px;top:640.0px"></div>
<div class="s" style="left:1151.5px;top:640.0px"></div>
<div class="s" style="left:1217.5px;top:640.0px"></div>
<div class="s" style="left:1294.5px;top:640.0px"></div>
<div class="s" style="left:1360.5px;top:640.0px"></div>
<div class="s" style="left:1437.5px;top:640.0px"></div>
<div class="s" style="left:1503.5px;top:640.0px"></div>
<div class="s" style="left:1580.5px;top:640.0px"></div>
<div class="s" style="left:997.5px;top:686.0px"></div>
<div class="s" style="left:1074.5px;top:686.0px"></div>
<div class="s" style="left:1151.5px;top:686.0px"></div>
<div class="s" style="left:1217.5px;top:686.0px"></div>
<div class="s" style="left:1294.5px;top:686.0px"></div>
<div class="s" style="left:1360.5px;top:686.0px"></div>
<div class="s" style="left:1437.5px;top:686.0px"></div>
<div class="s" style="left:1503.5px;top:686.0px"></div>
<div class="s" style="left:1580.5px;top:686.0px"></div>
<div class="s" style="left:997.5px;top:709.0px"></div>
<div class="s" style="left:1074.5px;top:709.0px"></div>
<div class="s" style="left:1151.5px;top:709.0px"></div>
<div class="s" style="left:1217.5px;top:709.0px"></div>
<div class="s" style="left:1294.5px;top:709.0px"></div>
<div class="s" style="left:1360.5px;top:709.0px"></div>
<div class="s" style="left:1437.5px;top:709.0px"></div>
<div class="s" style="left:1503.5px;top:709.0px"></div>
<div class="s" style="left:1580.5px;top:709.0px"></div>
<div class="s" style="left:997.5px;top:732.0px"></div>
<div class="s" style="left:1074.5px;top:732.0px"></div>
<div class="s" style="left:1151.5px;top:732.0px"></div>
<div class="s" style="left:1217.5px;top:732.0px"></div>
<div class="s" style="left:1294.5px;top:732.0px"></div>
<div class="s" style="left:1360.5px;top:732.0px"></div>
<div class="s" style="left:1437.5px;top:732.0px"></div>
<div class="s" style="left:1503.5px;top:732.0px"></div>
<div class="s" style="left:1580.5px;top:732.0px"></div>
<div class="s" style="left:997.5px;top:755.0px"></div>
<div class="s" style="left:1074.5px;top:755.0px"></div>
<div class="s" style="left:1151.5px;top:755.0px"></div>
<div class="s" style="left:1217.5px;top:755.0px"></div>
<div class="s" style="left:1294.5px;top:755.0px"></div>
<div class="s" style="left:1360.5px;top:755.0px"></div>
<div class="s" style="left:1437.5px;top:755.0px"></div>
<div class="s" style="left:1503.5px;top:755.0px"></div>
<div class="s" style="left:1580.5px;top:755.0px"></div>
<div class="s" style="left:997.5px;top:778.0px"></div>
<div class="s" style="left:1074.5px;top:778.0px"></div>
<div class="s" style="left:1151.5px;top:778.0px"></div>
<div class="s" style="left:1217.5px;top:778.0px"></div>
<div class="s" style="left:1294.5px;top:778.0px"></div>
<div class="s" style="left:1360.5px;top:778.0px"></div>
<div class="s" style="left:1437.5px;top:778.0px"></div>
<div class="s" style="left:1503.5px;top:778.0px"></div>
<div class="s" style="left:1580.5px;top:778.0px"></div>
<div class="s" style="left:997.5px;top:801.0px"></div>
<div class="s" style="left:1074.5px;top:801.0px"></div>
<div class="s" style="left:1151.5px;top:801.0px"></div>
<div class="s" style="left:1217.5px;top:801.0px"></div>
<div class="s" style="left:1294.5px;top:801.0px"></div>
<div class="s" style="left:1360.5px;top:801.0px"></div>
<div class="s" style="left:1437.5px;top:801.0px"></div>
<div class="s" style="left:1503.5px;top:801.0px"></div>
<div class="s" style="left:1580.5px;top:801.0px"></div>
<div class="s" style="left:997.5px;top:824.0px"></div>
<div class="s" style="left:1074.5px;top:824.0px"></div>
<div class="s" style="left:1151.5px;top:824.0px"></div>
<div class="s" style="left:1217.5px;top:824.0px"></div>
<div class="s" style="left:1294.5px;top:824.0px"></div>
<div class="s" style="left:1360.5px;top:824.0px"></div>
<div class="s" style="left:1437.5px;top:824.0px"></div>
<div class="s" style="left:1503.5px;top:824.0px"></div>
<div class="s" style="left:1580.5px;top:824.0px"></div>
<div class="t" style="left:1103.0px;top:246.0px">Temp [C]</div>
<div class="t" style="left:960.0px;top:269.0px">e1</div>
<div class="t" style="left:993.0px;top:269.0px">Core</div>
<div class="t" style="left:1048.0px;top:269.0px">Core3</div>
<div class="t" style="left:1114.0px;top:269.0px">Core</div>
<div class="t" style="left:1169.0px;top:269.0px">Core5</div>
<div class="t" style="left:1235.0px;top:269.0px">Iwlw</div>
<div class="t" style="left:1290.0px;top:269.0px">Compo</div>
<div class="t" style="left:1356.0px;top:269.0px">Sens</div>
<div class="t" style="left:1411.0px;top:269.0px">Senso</div>
<div class="t" style="left:1477.0px;top:269.0px">Comp</div>
<div class="t" style="left:1532.0px;top:269.0px">Senso</div>
<div class="t" style="left:1598.0px;top:269.0px">Sens</div>
<div class="t" style="left:1070.0px;top:453.0px">Frequency [MHz]</div>
<div class="t" style="left:960.0px;top:476.0px">re 2</div>
<div class="t" style="left:1026.0px;top:476.0px">Core</div>
<div class="t" style="left:1081.0px;top:476.0px">Core 4</div>
<div class="t" style="left:1169.0px;top:476.0px">Core</div>
<div class="t" style="left:1224.0px;top:476.0px">Core 6</div>
<div class="t" style="left:1312.0px;top:476.0px">Core</div>
<div class="t" style="left:1367.0px;top:476.0px">Core 8</div>
<div class="t" style="left:1455.0px;top:476.0px">Core</div>
<div class="t" style="left:1521.0px;top:476.0px">Core</div>
<div class="t" style="left:1598.0px;top:476.0px">Core</div>
<div class="t" style="left:1103.0px;top:660.0px">Util [%]</div>
<div class="t" style="left:960.0px;top:683.0px">e 2</div>
<div class="t" style="left:1004.0px;top:683.0px">Core 3</div>
<div class="t" style="left:1081.0px;top:683.0px">Core 4</div>
<div class="t" style="left:1169.0px;top:683.0px">Core</div>
<div class="t" style="left:1224.0px;top:683.0px">Core 6</div>
<div class="t" style="left:1312.0px;top:683.0px">Core</div>
<div class="t" style="left:1367.0px;top:683.0px">Core 8</div>
<div class="t" style="left:1455.0px;top:683.0px">Core</div>
<div class="t" style="left:1521.0px;top:683.0px">Core</div>
<div class="t" style="left:1598.0px;top:683.0px">Core</div>
<div class="t bd" style="left:608.0px;top:269.0px">Stress Options</div>
<div class="t" style="left:421.0px;top:315.0px">Time out [sec]: 120</div>
<div class="t" style="left:421.0px;top:361.0px">Sqrt() worker count: 12</div>
<div class="t" style="left:421.0px;top:407.0px">Sync() worker count: 0</div>
<div class="t" style="left:421.0px;top:453.0px">Malloc() / Free() worker count: 0</div>
<div class="t" style="left:454.0px;top:499.0px">Bytes per malloc*: 256M</div>
<div class="t" style="left:454.0px;top:545.0px">Touch a byte after * bytes: 4096</div>
<div class="t" style="left:454.0px;top:591.0px">Sleep time between Free() [sec]: none</div>
<div class="t" style="left:421.0px;top:637.0px">[ ] &quot;dirty&quot; the memory</div>
<div class="t" style="left:465.0px;top:660.0px">instead of free / alloc</div>
<div class="t" style="left:421.0px;top:706.0px">Write() / Unlink() worker count: 0</div>
<div class="t" style="left:454.0px;top:752.0px">Byte per Write(): 1G</div>
<div class="t" style="left:421.0px;top:798.0px">&lt;    Default   &gt;&lt;     Save     &gt;</div>
<div style="position:absolute;left:414px;top:256px;width:541px;height:577px;border:2px solid #e2e0da"></div>
<div style="position:absolute;left:421px;top:348.6px;width:528px;height:2.6px;background:repeating-linear-gradient(90deg,transparent 0,transparent 3px,#dcdbd7 3px,#dcdbd7 8px,transparent 8px,transparent 11px)"></div>
<div style="position:absolute;left:421px;top:394.6px;width:528px;height:2.6px;background:repeating-linear-gradient(90deg,transparent 0,transparent 3px,#dcdbd7 3px,#dcdbd7 8px,transparent 8px,transparent 11px)"></div>
<div style="position:absolute;left:421px;top:440.6px;width:528px;height:2.6px;background:repeating-linear-gradient(90deg,transparent 0,transparent 3px,#dcdbd7 3px,#dcdbd7 8px,transparent 8px,transparent 11px)"></div>
<div style="position:absolute;left:421px;top:693.6px;width:528px;height:2.6px;background:repeating-linear-gradient(90deg,transparent 0,transparent 3px,#dcdbd7 3px,#dcdbd7 8px,transparent 8px,transparent 11px)"></div>
<div style="position:absolute;left:421px;top:785.6px;width:528px;height:2.6px;background:repeating-linear-gradient(90deg,transparent 0,transparent 3px,#dcdbd7 3px,#dcdbd7 8px,transparent 8px,transparent 11px)"></div>
</div>
<svg class="ar" width="1683" height="886" viewBox="0 0 1683 886"><path d="M660.9 325.8 L734.0 327.4" stroke="#e8333c" stroke-width="5.2" /><path d="M642.9 325.8 L667.4 315.8 L662.4 325.8 L667.4 335.8 Z" fill="#e8333c"/><circle cx="751.2" cy="327.4" r="17.2" fill="#171421" stroke="#e8333c" stroke-width="5.0"/><text x="751.2" y="335.4" font-family="Liberation Sans" font-size="22.5" fill="#e8333c" text-anchor="middle">2</text></svg>
<svg class="ar" width="1683" height="886" viewBox="0 0 1683 886"><path d="M810.9 809.4 L891.4 808.0" stroke="#e8333c" stroke-width="5.2" /><path d="M792.9 809.4 L817.4 799.4 L812.4 809.4 L817.4 819.4 Z" fill="#e8333c"/><circle cx="908.7" cy="808.0" r="17.3" fill="#171421" stroke="#e8333c" stroke-width="5.2"/><text x="908.7" y="816.0" font-family="Liberation Sans" font-size="22.5" fill="#e8333c" text-anchor="middle">3</text></svg>
<div style="position:absolute;left:774px;top:808px;width:1.6px;height:3.2px;background:#d8d6d0"></div>
</body></html>
